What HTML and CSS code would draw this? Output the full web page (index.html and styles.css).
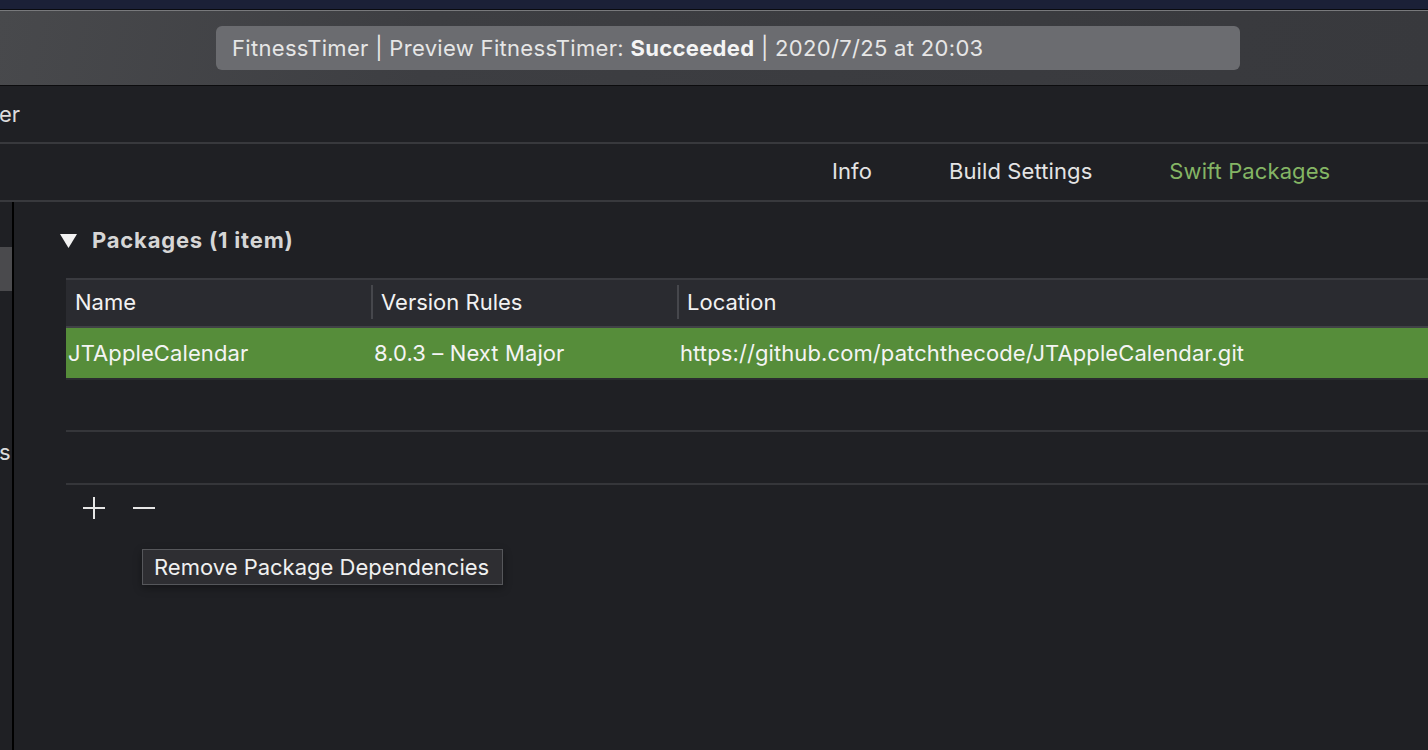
FILE: index.html
```html
<!DOCTYPE html>
<html>
<head>
<meta charset="utf-8">
<link rel="stylesheet" href="styles.css">
</head>
<body>
<div class="topstrip"></div>
<div class="toolbar">
  <div class="status">FitnessTimer | Preview FitnessTimer: <b>Succeeded</b> | 2020/7/25 at 20:03</div>
</div>
<div class="pathbar">
  <div class="crumb">er</div>
</div>
<div class="tabs">
  <span class="tab tab-info">Info</span>
  <span class="tab tab-build">Build Settings</span>
  <span class="tab tab-swift">Swift Packages</span>
</div>
<div class="main">
  <div class="sidebar">
    <div class="side-sel"></div>
    <div class="side-label">s</div>
  </div>
  <div class="content">
    <div class="section-head">
      <svg class="disclosure" width="17" height="14" viewBox="0 0 17 14"><path d="M0 0 H17 L8.5 14 Z" fill="#f2f2f2"/></svg>
      <span class="section-title">Packages (1 item)</span>
    </div>
    <div class="table">
      <div class="row head">
        <div class="cell c-name">Name</div>
        <div class="cell c-ver"><span class="sep"></span>Version Rules</div>
        <div class="cell c-loc"><span class="sep"></span>Location</div>
      </div>
      <div class="row sel">
        <div class="cell c-name">JTAppleCalendar</div>
        <div class="cell c-ver">8.0.3 – Next Major</div>
        <div class="cell c-loc">https://github.com/patchthecode/JTAppleCalendar.git</div>
      </div>
      <div class="row empty"></div>
      <div class="row empty"></div>
    </div>
    <div class="buttons">
      <svg width="24" height="24" viewBox="0 0 24 24"><path d="M12 1 V23 M1 12 H23" stroke="#e6e6e6" stroke-width="2"/></svg>
      <svg width="24" height="24" viewBox="0 0 24 24"><path d="M1 12 H23" stroke="#e6e6e6" stroke-width="2"/></svg>
    </div>
    <div class="tooltip-wrap">
      <div class="tooltip">Remove Package Dependencies</div>
    </div>
  </div>
</div>
</body>
</html>
```
FILE: styles.css
```css
html, body {
  margin: 0;
  padding: 0;
}
body {
  width: 1428px;
  height: 750px;
  overflow: hidden;
  background: #1f2024;
  font-family: Inter, "Liberation Sans", sans-serif;
  color: #e8e8e8;
}
.topstrip {
  height: 9px;
  background: #1b2037;
  border-bottom: 1px solid #0a0b10;
}
.toolbar {
  height: 74px;
  border-top: 1px solid #78797c;
  border-bottom: 1px solid #0c0c0e;
  background: linear-gradient(100deg, #48494c 0%, #3d3e42 30%, #38393d 100%);
  display: flex;
  align-items: flex-start;
}
.status {
  margin: 15px 0 0 216px;
  width: 1024px;
  height: 44px;
  box-sizing: border-box;
  padding-left: 16px;
  border-radius: 6px;
  background: #6b6c70;
  color: #e6e6e6;
  font-size: 22px;
  line-height: 44px;
  letter-spacing: 0.32px;
  white-space: nowrap;
}
.status b {
  color: #f4f4f4;
  font-weight: 700;
}
.pathbar {
  height: 56px;
  border-bottom: 2px solid #38393d;
  display: flex;
  align-items: center;
}
.crumb {
  white-space: nowrap;
  font-size: 22px;
  color: #dcdcdc;
  margin-left: -1px;
}
.tabs {
  height: 54px;
  padding-bottom: 2px;
  border-bottom: 2px solid #38393d;
  display: flex;
  align-items: center;
  font-size: 22px;
  letter-spacing: 0.1px;
  color: #e4e4e4;
}
.tab-info { margin-left: 832px; }
.tab-build { margin-left: 77px; }
.tab-swift { margin-left: 77px; color: #84b564; }
.main {
  display: flex;
  height: 549px;
}
.sidebar {
  width: 12px;
  border-right: 2px solid #000;
  overflow: hidden;
  flex: none;
}
.side-sel {
  margin-top: 45px;
  height: 44px;
  background: #4a4a4d;
}
.side-label {
  margin-top: 148px;
  white-space: nowrap;
  font-size: 22px;
  color: #dcdcdc;
  margin-left: -1px;
}
.content {
  flex: 1;
  overflow: hidden;
}
.section-head {
  display: flex;
  padding-left: 46px;
  height: 76px;
  align-items: flex-start;
}
.disclosure {
  margin-top: 32px;
}
.section-title {
  margin-left: 15px;
  margin-top: 25px;
  font-size: 22px;
  font-weight: 700;
  letter-spacing: 0.8px;
  color: #d6d6d6;
}
.table {
  margin-left: 52px;
  border-top: 2px solid #3a3b40;
}
.row {
  display: flex;
  align-items: center;
  font-size: 22px;
  white-space: nowrap;
}
.row.head {
  height: 46px;
  background: #2a2b30;
  color: #f2f2f2;
  border-bottom: 2px solid #404146;
}
.row.head .cell {
  padding-bottom: 2px;
}
.row.sel {
  height: 50px;
  background: #568d3a;
  color: #f4f4f4;
  border-bottom: 2px solid #2a2b2f;
  letter-spacing: 0.1px;
}
.row.empty {
  height: 50px;
  border-bottom: 2px solid #35363a;
}
.row.empty + .row.empty {
  height: 51px;
}
.cell {
  display: flex;
  align-items: center;
  height: 100%;
  box-sizing: border-box;
}
.head .c-name { width: 305px; padding-left: 9px; }
.head .c-ver { width: 306px; }
.head .c-loc { flex: 1; }
.head .sep {
  width: 2px;
  height: 34px;
  background: #46474c;
  margin-right: 8px;
}
.sel .c-name { width: 305px; padding-left: 2px; }
.sel .c-ver { width: 306px; padding-left: 3px; }
.sel .c-loc { flex: 1; padding-left: 3px; }
.buttons {
  margin-left: 68px;
  margin-top: 11px;
  display: flex;
  gap: 26px;
}
.tooltip-wrap {
  margin-left: 128px;
  margin-top: 29px;
  display: flex;
}
.tooltip {
  height: 36px;
  box-sizing: border-box;
  padding: 0 13px 0 11px;
  background: #2e2e32;
  border: 1px solid #56575b;
  font-size: 22px;
  line-height: 34px;
  color: #f0f0f0;
  box-shadow: 0 3px 8px rgba(0,0,0,0.35);
  white-space: nowrap;
}
```
